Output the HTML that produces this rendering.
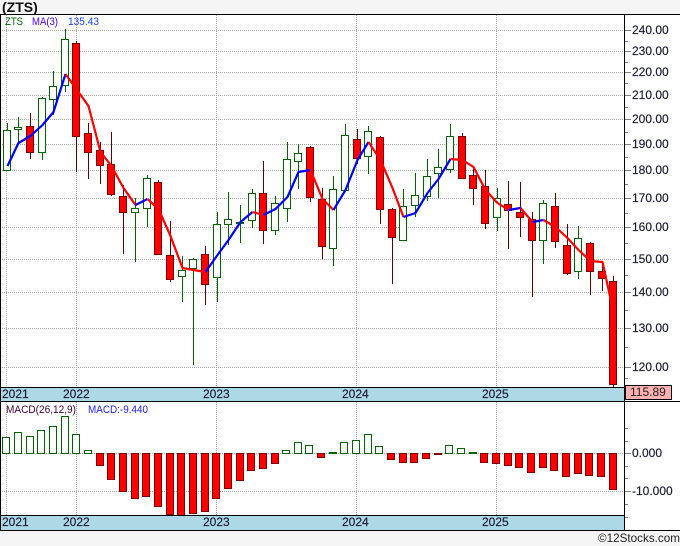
<!DOCTYPE html>
<html><head><meta charset="utf-8"><title>ZTS</title>
<style>
html,body{margin:0;padding:0;background:#f5f5f5;width:680px;height:546px;overflow:hidden}
svg{display:block}
text{font-family:"Liberation Sans",sans-serif}
</style></head>
<body>
<svg width="680" height="546" viewBox="0 0 680 546" xmlns="http://www.w3.org/2000/svg">
<rect x="0" y="0" width="680" height="546" fill="#f5f5f5"/>
<rect x="0" y="14" width="680" height="517" fill="#fff"/>
<g fill="none" shape-rendering="crispEdges">
<!-- grid -->
<path stroke="#a8a8a8" stroke-dasharray="1 1" d="M0 30.5H624M0 51.5H624M0 72.5H624M0 95.5H624M0 119.5H624M0 144.5H624M0 170.5H624M0 198.5H624M0 227.5H624M0 259.5H624M0 292.5H624M0 328.5H624M0 367.5H624M0 453.5H624M0 491.5H624"/>
<path stroke="#a8a8a8" stroke-dasharray="1 1" d="M6.5 15V387M76.5 15V387M216.5 15V387M356.5 15V387M496.5 15V387M6.5 402V515M76.5 402V515M216.5 402V515M356.5 402V515M496.5 402V515"/>
<!-- green wicks -->
<path stroke="#006400" d="M7.5 123V170M18.5 117V143M42.5 97V160M53.5 71V115M65.5 29V92M135.5 198V262M147.5 175V227M182.5 256V302M193.5 258V365M217.5 212V302M228.5 192V245M240.5 205V243M252.5 189V228M275.5 196V235M287.5 142V222M298.5 144V189M333.5 176V266M345.5 124V190M368.5 126V174M403.5 189V240M415.5 173V217M427.5 159V201M438.5 149V198M450.5 124V173M497.5 188V231M543.5 200V264M578.5 226V279"/>
<!-- red wicks -->
<path stroke="#600000" d="M30.5 113V159M76.5 41V172M88.5 123V179M100.5 142V184M111.5 132V196M123.5 185V254M158.5 180V255M170.5 221V282M205.5 246V305M263.5 161V244M310.5 146V202M322.5 188V259M357.5 129V164M380.5 136V224M392.5 208V284M462.5 133V179M473.5 167V205M485.5 170V229M508.5 181V249M520.5 182V237M532.5 212V297M555.5 193V248M567.5 224V275M590.5 242V295M602.5 262V291M613.5 276V388"/>
<!-- green bodies -->
<path fill="#fff" stroke="#006400" d="M3.5 130.5h7v40h-7zM14.5 127.5h7v2h-7zM38.5 98.5h7v54h-7zM49.5 86.5h7v13h-7zM61.5 39.5h7v46h-7zM131.5 208.5h7v4h-7zM143.5 178.5h7v30h-7zM178.5 270.5h7v6h-7zM189.5 259.5h7v9h-7zM213.5 224.5h7v53h-7zM224.5 219.5h7v5h-7zM236.5 222.5h7v1h-7zM248.5 193.5h7v27h-7zM271.5 203.5h7v27h-7zM283.5 159.5h7v49h-7zM294.5 153.5h7v8h-7zM329.5 189.5h7v59h-7zM341.5 135.5h7v55h-7zM364.5 131.5h7v25h-7zM399.5 206.5h7v34h-7zM411.5 195.5h7v10h-7zM423.5 176.5h7v20h-7zM434.5 167.5h7v6h-7zM446.5 136.5h7v33h-7zM493.5 198.5h7v19h-7zM539.5 203.5h7v37h-7zM574.5 238.5h7v33h-7z"/>
<!-- red bodies -->
<path fill="#f00" stroke="#800000" d="M26.5 126.5h7v26h-7zM72.5 43.5h7v93h-7zM84.5 133.5h7v19h-7zM96.5 150.5h7v15h-7zM107.5 164.5h7v30h-7zM119.5 196.5h7v16h-7zM154.5 182.5h7v72h-7zM166.5 255.5h7v24h-7zM201.5 254.5h7v30h-7zM259.5 193.5h7v37h-7zM306.5 147.5h7v50h-7zM318.5 199.5h7v47h-7zM353.5 139.5h7v19h-7zM376.5 137.5h7v72h-7zM388.5 209.5h7v28h-7zM458.5 136.5h7v42h-7zM469.5 175.5h7v13h-7zM481.5 186.5h7v37h-7zM504.5 204.5h7v6h-7zM516.5 212.5h7v5h-7zM528.5 219.5h7v21h-7zM551.5 206.5h7v35h-7zM563.5 245.5h7v28h-7zM586.5 243.5h7v28h-7zM598.5 271.5h7v7h-7zM609.5 281.5h7v103h-7z"/>
<!-- MACD green -->
<path fill="#fff" stroke="#006400" d="M2.5 437.5h7v16h-7zM14.5 432.5h7v21h-7zM26.5 436.5h7v17h-7zM37.5 430.5h7v23h-7zM49.5 426.5h7v27h-7zM61.5 416.5h7v37h-7zM72.5 434.5h7v19h-7zM84.5 450.5h7v3h-7zM282.5 450.5h7v3h-7zM294.5 442.5h7v11h-7zM305.5 445.5h7v8h-7zM329.5 452.5h7v1h-7zM340.5 442.5h7v11h-7zM352.5 440.5h7v13h-7zM364.5 434.5h7v19h-7zM375.5 446.5h7v7h-7zM445.5 445.5h7v8h-7zM457.5 448.5h7v5h-7zM469.5 452.5h7v1h-7z"/>
<!-- MACD red -->
<path fill="#f00" stroke="#800000" d="M96.5 453.5h7v12h-7zM107.5 453.5h7v26h-7zM119.5 453.5h7v38h-7zM131.5 453.5h7v45h-7zM142.5 453.5h7v43h-7zM154.5 453.5h7v53h-7zM166.5 453.5h7v61h-7zM177.5 453.5h7v62h-7zM189.5 453.5h7v60h-7zM201.5 453.5h7v58h-7zM212.5 453.5h7v45h-7zM224.5 453.5h7v35h-7zM236.5 453.5h7v27h-7zM247.5 453.5h7v17h-7zM259.5 453.5h7v15h-7zM271.5 453.5h7v10h-7zM317.5 453.5h7v4h-7zM387.5 453.5h7v6h-7zM399.5 453.5h7v9h-7zM410.5 453.5h7v9h-7zM422.5 453.5h7v5h-7zM434.5 453.5h7v1h-7zM480.5 453.5h7v9h-7zM492.5 453.5h7v10h-7zM504.5 453.5h7v12h-7zM515.5 453.5h7v14h-7zM527.5 453.5h7v19h-7zM539.5 453.5h7v14h-7zM550.5 453.5h7v17h-7zM562.5 453.5h7v23h-7zM574.5 453.5h7v20h-7zM585.5 453.5h7v22h-7zM597.5 453.5h7v23h-7zM609.5 453.5h7v36h-7z"/>
<!-- strips -->
<rect x="0.5" y="387.5" width="624" height="14" fill="#add8e6" stroke="#000"/>
<rect x="0.5" y="515.5" width="624" height="15" fill="#add8e6" stroke="#000"/>
<path stroke="#000" d="M0 14.5H680M0 401.5H680M0 530.5H680M0.5 14V531M624.5 14V531"/>
<!-- ticks -->
<path stroke="#808080" d="M625 30.5h6M625 51.5h6M625 72.5h6M625 95.5h6M625 119.5h6M625 144.5h6M625 170.5h6M625 198.5h6M625 227.5h6M625 259.5h6M625 292.5h6M625 328.5h6M625 367.5h6M625 41.5h3M625 62.5h3M625 83.5h3M625 107.5h3M625 132.5h3M625 157.5h3M625 184.5h3M625 213.5h3M625 243.5h3M625 275.5h3M625 310.5h3M625 347.5h3M625 378.5h3M625 428.5h3M625 441.5h3M625 453.5h6M625 466.5h3M625 478.5h3M625 491.5h6M625 504.5h3M625 517.5h3"/>
</g>
<!-- moving average -->
<g fill="none" stroke-width="2.2" stroke-linejoin="round">
<path stroke="#0000ff" d="M7.5 166L18.5 143L30.5 136L42.5 125L53.5 112L65.5 74"/>
<path stroke="#ff0000" d="M65.5 74L77 90L88.5 106L100.5 152L111.5 166L123.5 188L135.5 205"/>
<path stroke="#0000ff" d="M135.5 205L147.5 199"/>
<path stroke="#ff0000" d="M147.5 199L158.5 209L170.5 236L182.5 268L193.5 270L205.5 272"/>
<path stroke="#0000ff" d="M205.5 272L217.5 255L228.5 240L240.5 222L252.5 212"/>
<path stroke="#ff0000" d="M252.5 212L263.5 215"/>
<path stroke="#0000ff" d="M263.5 215L275.5 209L287.5 197L298.5 172L310.5 170"/>
<path stroke="#ff0000" d="M310.5 170L322.5 199L333.5 210"/>
<path stroke="#0000ff" d="M333.5 210L345.5 190L357.5 160L368.5 142"/>
<path stroke="#ff0000" d="M368.5 142L380.5 160L392.5 188L403.5 217"/>
<path stroke="#0000ff" d="M403.5 217L415.5 213L427.5 193L438.5 179L450.5 159"/>
<path stroke="#ff0000" d="M450.5 159L462.5 160L473.5 167L485.5 190L497.5 203L508.5 210"/>
<path stroke="#0000ff" d="M508.5 210L520.5 208"/>
<path stroke="#ff0000" d="M520.5 208L532.5 222"/>
<path stroke="#0000ff" d="M532.5 222L543.5 220"/>
<path stroke="#ff0000" d="M543.5 220L555.5 227L567.5 238L578.5 250L590.5 261L602.5 262L613 310"/>
</g>
<!-- text -->
<text x="2" y="12" font-size="14" font-weight="bold" fill="#111">(ZTS)</text>
<text x="5" y="25" font-size="11" fill="#006400" textLength="18" lengthAdjust="spacingAndGlyphs">ZTS</text>
<text x="32" y="25" font-size="11" fill="#4000ff" textLength="26" lengthAdjust="spacingAndGlyphs">MA(3)</text>
<text x="68" y="25" font-size="11" fill="#2040ff" textLength="31" lengthAdjust="spacingAndGlyphs">135.43</text>
<text x="6" y="413" font-size="11" fill="#400030" textLength="70" lengthAdjust="spacingAndGlyphs">MACD(26,12,9)</text>
<text x="88" y="413" font-size="11" fill="#2020ff" textLength="60" lengthAdjust="spacingAndGlyphs">MACD:-9.440</text>
<g font-size="12" fill="#1a1a30" stroke="#1a1a30" stroke-width="0.15">
<text x="632" y="34">240.00</text>
<text x="632" y="55">230.00</text>
<text x="632" y="76">220.00</text>
<text x="632" y="99">210.00</text>
<text x="632" y="123">200.00</text>
<text x="632" y="148">190.00</text>
<text x="632" y="174">180.00</text>
<text x="632" y="202">170.00</text>
<text x="632" y="231">160.00</text>
<text x="632" y="263">150.00</text>
<text x="632" y="296">140.00</text>
<text x="632" y="332">130.00</text>
<text x="632" y="371">120.00</text>
<text x="632" y="457">0.000</text>
<text x="632" y="495">-10.000</text>
<text x="2" y="398">2021</text>
<text x="63" y="398">2022</text>
<text x="203" y="398">2023</text>
<text x="342" y="398">2024</text>
<text x="482" y="398">2025</text>
<text x="2" y="526">2021</text>
<text x="63" y="526">2022</text>
<text x="203" y="526">2023</text>
<text x="342" y="526">2024</text>
<text x="482" y="526">2025</text>
</g>
<rect x="625.5" y="385.5" width="46" height="14" fill="#ffb0b0" stroke="#000" shape-rendering="crispEdges"/>
<text x="630" y="396" font-size="12" fill="#222">115.89</text>
<text x="598" y="542" font-size="12" fill="#222" textLength="82" lengthAdjust="spacingAndGlyphs">©12Stocks.com</text>
</svg>
</body></html>
